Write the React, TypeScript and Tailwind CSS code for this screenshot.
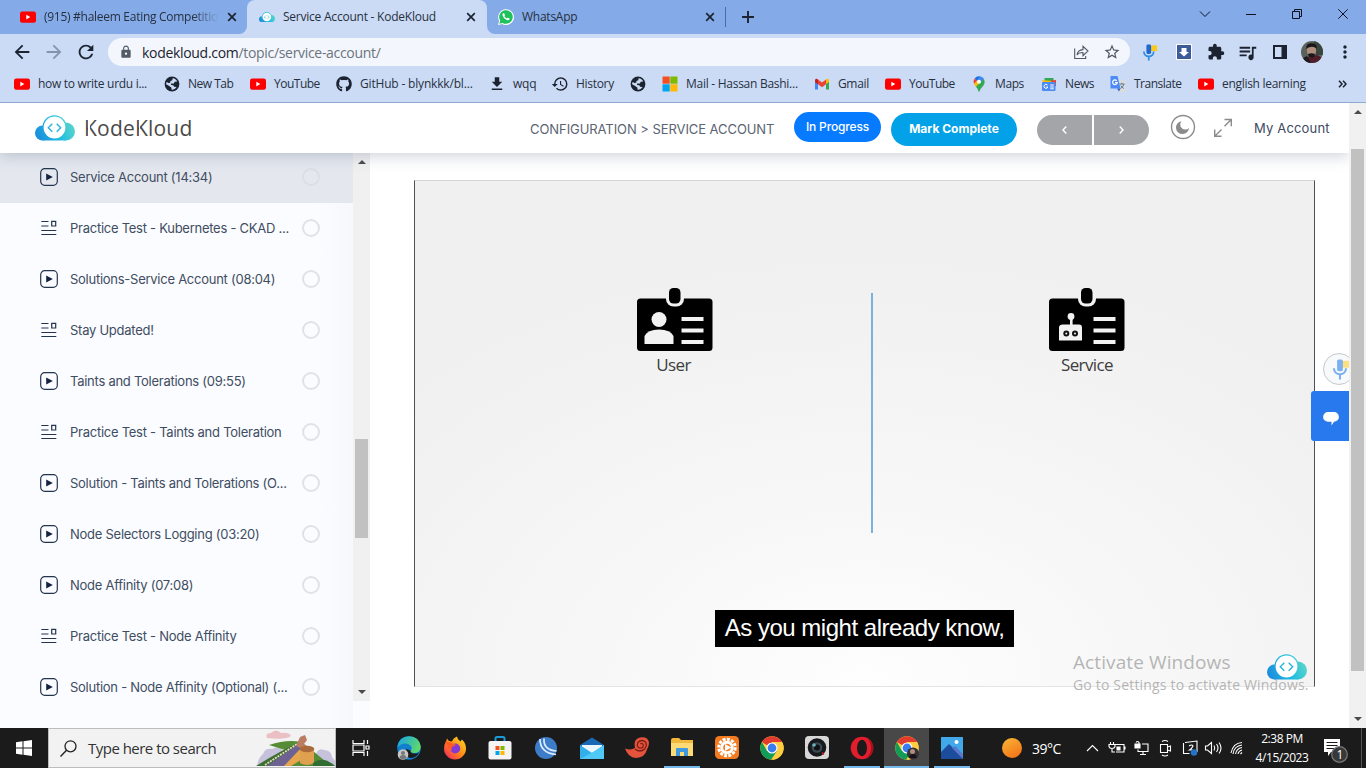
import React from "react";
import { FaGithub } from "react-icons/fa";
import { MdArrowBack, MdArrowForward, MdRefresh, MdLock, MdStarBorder, MdExtension, MdQueueMusic, MdHistory, MdMoreVert, MdDownload } from "react-icons/md";

function Cloud({ id, className }: { id: string; className: string }) {
  return (
    <svg viewBox="0 0 40 26" className={className}>
      <defs>
        <linearGradient id={id} gradientUnits="userSpaceOnUse" x1="0" y1="24" x2="38" y2="6">
          <stop offset="0" stopColor="#1b86dd" />
          <stop offset="0.55" stopColor="#20bde0" />
          <stop offset="1" stopColor="#5fd6c8" />
        </linearGradient>
      </defs>
      <g fill={`url(#${id})`}>
        <circle cx="7.500" cy="18" r="7.500" />
        <circle cx="31" cy="16.500" r="9" />
        <circle cx="19.500" cy="12.300" r="12" />
        <path d="M7.500 15h23.500v10.500H7.500z" />
      </g>
      <circle cx="19.500" cy="12.500" r="10.900" fill="#fff" />
      <path d="M17.300 8.700l-4 4 4 4M21.700 8.700l4 4-4 4" fill="none" stroke="#25b5dd" strokeWidth="1.400" />
    </svg>
  );
}

function YouTube() {
  return (
    <svg viewBox="0 0 16 16" className="size-4 shrink-0">
      <rect x="0" y="2.500" width="16" height="11.300" rx="2.200" fill="#f00" />
      <path d="M6.300 5.800v4.600l4-2.300z" fill="#fff" />
    </svg>
  );
}

function Globe() {
  return (
    <svg viewBox="0 0 16 16" className="size-4 shrink-0">
      <circle cx="8" cy="8" r="7.400" fill="#1c2330" />
      <path d="M8.600 2.200q3.300.2 4.700 3.300l-2.600.2-.8 1.700-2.700.1-.3 1.400 2.300.4 1 1.400 2.400.2q-1.800 3-4.800 3.100l-.5-2.500L4.800 9.700 2.100 8.200q.1-1.200.5-2.100l1.900 1 1.700-.3.3-1.700 1.800-.8z" fill="#cbdbf5" />
    </svg>
  );
}

function CloseX() {
  return (
    <svg viewBox="0 0 10 10" className="size-[10px] shrink-0">
      <path d="M1.200 1.200l7.600 7.600M8.800 1.200L1.200 8.800" stroke="#1c2433" strokeWidth="1.700" />
    </svg>
  );
}

function WhatsApp() {
  return (
    <svg viewBox="0 0 16 16" className="size-4 shrink-0">
      <path d="M0 16l1.100-4.100A7.900 7.900 0 1 1 4.100 15z" fill="#fff" />
      <path d="M1.300 14.700l.9-3.100A6.800 6.800 0 1 1 4.600 13.900z" fill="#1fc15d" />
      <path d="M5.300 4.200c-.9.500-1 1.600-.5 2.700.8 1.800 2.200 3.200 4 4.100 1.200.500 2.300.3 2.800-.7.200-.5 0-.8-.3-1l-1.200-.6c-.3-.1-.5 0-.7.200l-.5.600c-.9-.3-1.900-1.200-2.500-2.200l.5-.7c.1-.2.100-.4 0-.6l-.5-1.300c-.2-.5-.6-.6-1.100-.500z" fill="#fff" />
    </svg>
  );
}

function MicIcon({ className, soft }: { className: string; soft?: boolean }) {
  const blue = soft ? "#7db0ee" : "#1f67d2";
  return (
    <svg viewBox="0 0 16 18" className={className}>
      <rect x="8" y="1.500" width="7.500" height="6" fill={soft ? "#fbdf83" : "#fbc916"} />
      <rect x="4.200" y="0.500" width="5" height="10" rx="1.500" fill={blue} />
      <path d="M1.500 8a5.200 5.200 0 0 0 10.400 0M6.700 13v4.500" fill="none" stroke={soft ? "#7db0ee" : "#2b8ce6"} strokeWidth="1.800" />
    </svg>
  );
}

function Microsoft() {
  return (
    <svg viewBox="0 0 16 16" className="size-4 shrink-0">
      <path d="M.5.500h7.200v7.200H.5z" fill="#f25022" />
      <path d="M8.300.5h7.200v7.200H8.300z" fill="#7fba00" />
      <path d="M.5 8.300h7.200v7.200H.5z" fill="#00a4ef" />
      <path d="M8.300 8.300h7.200v7.200H8.300z" fill="#ffb900" />
    </svg>
  );
}

function Gmail() {
  return (
    <svg viewBox="0 0 16 16" className="size-4 shrink-0">
      <path d="M1 4.500v9h3V7z" fill="#4285f4" />
      <path d="M15 4.500v9h-3V7z" fill="#34a853" />
      <path d="M4 3.500L8 6.600l4-3.100v4.700L8 11.200 4 8.200z" fill="#ea4335" />
      <path d="M1 4.500c0-1.700 1.700-2.200 3-1v4.700L1 6z" fill="#c5221f" />
      <path d="M15 4.500c0-1.700-1.700-2.200-3-1v4.700L15 6z" fill="#fbbc04" />
    </svg>
  );
}

function Maps() {
  return (
    <svg viewBox="0 0 16 16" className="size-4 shrink-0">
      <path d="M8 .3A5.600 5.600 0 0 0 3.600 2.400L6.300 4.700 9.800.6Q9 .3 8 .3z" fill="#1a73e8" />
      <path d="M3.600 2.400A5.500 5.500 0 0 0 3 8l3.300-3.300z" fill="#ea4335" />
      <path d="M9.800.6L6 5l3.800 2.500 3-4.800A5.400 5.400 0 0 0 9.800.6z" fill="#4285f4" />
      <path d="M3 8c.6 1.100 1.300 1.900 1.900 2.700L9.800 7.400 6 4.900z" fill="#fbbc04" />
      <path d="M12.800 2.700L4.900 10.700C6.500 12.800 7 13.500 7.300 15c.3 1 1.100 1 1.400 0 .8-3.800 4.900-5 4.900-9.100q0-1.700-.8-3.200z" fill="#34a853" />
      <circle cx="8" cy="5.700" r="2" fill="#fff" />
    </svg>
  );
}

function News() {
  return (
    <svg viewBox="0 0 16 16" className="size-4 shrink-0">
      <path d="M3.500 2h9v8h-9z" fill="#34a853" />
      <path d="M1.500 4l9 1-1 5-8-1z" fill="#fbbc04" />
      <path d="M10 4.500l5-.5v6h-4z" fill="#ea4335" />
      <rect x="1" y="6" width="13.500" height="9" rx="1" fill="#4c8bf5" />
      <path d="M6.500 9a2 2 0 1 0 .4 2H5.200M12.800 9H9.200M12.800 11H9.200M12.800 12.800H9.200" stroke="#fff" strokeWidth="1" fill="none" />
    </svg>
  );
}

function Translate() {
  return (
    <svg viewBox="0 0 16 16" className="size-4 shrink-0">
      <path d="M6 4.500h9.500V16H9z" fill="#dcdcdc" />
      <path d="M9.500 8h5M12 6.800V8M14 8q-.7 3-3.500 4.500M10.800 9.500q1 2 3 3" stroke="#5e7d99" fill="none" />
      <path d="M.5 0h7l3 12.500H.5z" fill="#4c8bf5" />
      <path d="M7 12.500h3.500L9 15.500z" fill="#2f62c4" />
      <path d="M6.700 4.800a2.300 2.300 0 1 0 .5 1.800H5" stroke="#fff" strokeWidth="1.200" fill="none" />
    </svg>
  );
}

const ui = "font-['Open_Sans','Noto_Sans',sans-serif]";
const dark = "size-[18px] -mx-px shrink-0 text-[#1c2330]";

const bookmarks: { w: string; t?: string; track: string; icon: React.ReactNode }[] = [
  { w: "w-[150px]", t: "how to write urdu i...", track: "tracking-[-0.3px]", icon: <YouTube /> },
  { w: "w-[86px]", t: "New Tab", track: "tracking-[-0.5px]", icon: <Globe /> },
  { w: "w-[86px]", t: "YouTube", track: "tracking-[-0.5px]", icon: <YouTube /> },
  { w: "w-[153px]", t: "GitHub - blynkkk/bl...", track: "tracking-[-0.18px]", icon: <FaGithub className="size-4 shrink-0 text-[#1c2330]" /> },
  { w: "w-[63px]", t: "wqq", track: "tracking-[-0.2px]", icon: <MdDownload className={dark} /> },
  { w: "w-[78px]", t: "History", track: "tracking-[-0.3px]", icon: <MdHistory className={dark} /> },
  { w: "w-[32px]", track: "", icon: <Globe /> },
  { w: "w-[152px]", t: "Mail - Hassan Bashi...", track: "tracking-[-0.27px]", icon: <Microsoft /> },
  { w: "w-[71px]", t: "Gmail", track: "tracking-[-0.35px]", icon: <Gmail /> },
  { w: "w-[86px]", t: "YouTube", track: "tracking-[-0.5px]", icon: <YouTube /> },
  { w: "w-[70px]", t: "Maps", track: "tracking-[-0.4px]", icon: <Maps /> },
  { w: "w-[69px]", t: "News", track: "tracking-[-0.4px]", icon: <News /> },
  { w: "w-[88px]", t: "Translate", track: "tracking-[-0.5px]", icon: <Translate /> },
  { w: "w-[140px]", t: "english learning", track: "tracking-[-0.3px]", icon: <YouTube /> },
];

function Browser() {
  return (
    <header className={`${ui} flex h-[103px] shrink-0 flex-col border-b border-[#8fa9d2] bg-[#cbdbf5] text-[12px] text-[#27303f]`}>
      <div className="flex h-[34px] bg-[#cbdbf5]">
        <div className="flex w-[247px] items-center rounded-br-[8px] bg-[#84abe8] pr-[10px] pl-5">
          <YouTube />
          <span className="ml-2 w-[175px] overflow-hidden whitespace-nowrap tracking-[-0.28px] [mask-image:linear-gradient(90deg,#000_85%,transparent)]">(915) #haleem Eating Competitio</span>
          <span className="ml-2 flex"><CloseX /></span>
        </div>
        <div className="flex w-[240px] bg-[#84abe8]">
          <div className="flex w-[240px] items-center rounded-t-[8px] bg-[#cbdbf5] pl-3">
            <Cloud id="tabCloud" className="w-4 shrink-0" />
            <span className="ml-2 w-[183px] whitespace-nowrap tracking-[-0.23px]">Service Account - KodeKloud</span>
            <CloseX />
          </div>
        </div>
        <div className="flex flex-1 rounded-bl-[8px] bg-[#84abe8]">
          <div className="flex w-[239px] items-center pl-[11px]">
            <WhatsApp />
            <span className="ml-2 w-[183px] tracking-[-0.25px]">WhatsApp</span>
            <CloseX />
            <span className="ml-[10px] h-5 w-px bg-[#4a6ba3]" />
          </div>
          <div className="flex w-[44px] items-center justify-center">
            <svg viewBox="0 0 12 12" className="size-3"><path d="M6 0v12M0 6h12" stroke="#1c2433" strokeWidth="1.900" /></svg>
          </div>
          <div className="ml-auto flex h-[28px]">
            {["M0 2.500l5 5 5-5", "M0 5.500h10", "M.5 2.500h7v7h-7zM2.500 2.500v-2h7v7h-2", "M.3.300l9.400 9.400M9.700.3L.3 9.700"].map((d) => (
              <span key={d} className="flex w-[46px] items-center justify-center">
                <svg viewBox="0 0 10 10" className="size-[10px] overflow-visible"><path d={d} fill="none" stroke="#0c1220" /></svg>
              </span>
            ))}
          </div>
        </div>
      </div>
      <div className="flex h-[36px] items-center pt-0">
        <div className="flex w-[108px] items-center gap-[10px] pl-[11px] text-[22px] text-[#1c2330]">
          <MdArrowBack className="size-[22px]" />
          <MdArrowForward className="size-[22px] text-[#8492ac]" />
          <MdRefresh className="size-[22px]" />
        </div>
        <div className="flex h-7 w-[1022px] items-center rounded-full bg-[#f3f7fd] pl-[11px]">
          <MdLock className="size-[14px] text-[#545b66]" />
          <span className="ml-[9px] text-[14px] tracking-[-0.31px] text-[#6c737e]"><span className="text-[#1c2330]">kodekloud.com</span>/topic/service-account/</span>
          <svg viewBox="0 0 16 16" className="ml-auto size-4 text-[#515863]"><path d="M1.700 4.500v10h11v-2.500M4 11c.5-3.800 2.500-5.200 6-5.400V2.300l5 4.700-5 4.700V8.500c-3 0-4.700.500-6 2.500z" fill="none" stroke="currentColor" strokeWidth="1.100" /></svg>
          <MdStarBorder className="mr-[9px] ml-[14px] size-[18px] text-[#515863]" />
        </div>
        <div className="flex flex-1 items-center pl-[12px] text-[#1c2330]">
          <MicIcon className="h-[17px] w-4" />
          <svg viewBox="0 0 16 16" className="ml-[18px] size-4"><path d="M0 0h16v16H0z" fill="#fff" /><path d="M1 1h14v14H1z" fill="#3d5a99" /><path d="M5.500 4h5v4h2.500L8 12.500 3 8h2.500z" fill="#fff" /></svg>
          <MdExtension className="ml-[15px] size-[18px]" />
          <MdQueueMusic className="ml-[12px] size-[21px] scale-y-110" />
          <svg viewBox="0 0 14 14" className="ml-[15px] size-[14px]"><path d="M1 1h12v12H1z" fill="none" stroke="#1c2330" strokeWidth="2" /><path d="M8.500 0H14v14H8.500z" fill="#1c2330" /></svg>
          <Portrait className="ml-[14px] size-[22px]" />
          <MdMoreVert className="ml-[12px] size-[20px]" />
        </div>
      </div>
      <div className="flex h-[28px] items-center pl-[14px]">
        {bookmarks.map((b, i) => (
          <span key={i} className={`${b.w} flex shrink-0 items-center gap-2 whitespace-nowrap`}>
            {b.icon}
            {b.t && <span className={b.track}>{b.t}</span>}
          </span>
        ))}
        <svg viewBox="0 0 9 8" className="h-2 w-[9px]"><path d="M1 .8L4 4 1 7.200M5 .8L8 4 5 7.200" fill="none" stroke="#1c2330" strokeWidth="1.500" /></svg>
      </div>
    </header>
  );
}

function Portrait({ className }: { className: string }) {
  return (
    <svg viewBox="0 0 22 22" className={`${className} shrink-0 overflow-hidden rounded-full`}>
      <path d="M0 0h22v22H0z" fill="#59635b" />
      <path d="M13 0h9v14h-7z" fill="#39463e" />
      <path d="M2 22q1-6 8-7l6-1q5 1 6 8z" fill="#501e2b" />
      <path d="M0 22q0-5 6-7l4 7z" fill="#1d1a20" />
      <ellipse cx="10.500" cy="9.500" rx="4.600" ry="6" fill="#b08f7e" />
      <path d="M5.400 8Q4.500 2 10.500 2.200 16.500 2 15.700 8q-1-2-5-2.200-4 .2-5.300 2.200zM7 13q3.500-1.500 7 0-.5 3.800-3.500 3.600T7 13z" fill="#191719" />
    </svg>
  );
}

function Arrow({ up }: { up?: boolean }) {
  return (
    <svg viewBox="0 0 8 4" className="h-1 w-2"><path d={up ? "M0 4l4-4 4 4z" : "M0 0l4 4 4-4z"} fill="#4a4a4a" /></svg>
  );
}

const lessons: [string, boolean][] = [
  ["Service Account (14:34)", true],
  ["Practice Test - Kubernetes - CKAD ...", false],
  ["Solutions-Service Account (08:04)", true],
  ["Stay Updated!", false],
  ["Taints and Tolerations (09:55)", true],
  ["Practice Test - Taints and Toleration", false],
  ["Solution - Taints and Tolerations (O...", true],
  ["Node Selectors Logging (03:20)", true],
  ["Node Affinity (07:08)", true],
  ["Practice Test - Node Affinity", false],
  ["Solution - Node Affinity (Optional) (...", true],
];

/* Wordmark capital whose arms stand clear of its stem. */
function SplitK() {
  return <span className="relative after:absolute after:top-1 after:left-[4px] after:h-[22px] after:w-[1.5px] after:bg-white">K</span>;
}

function SiteHeader() {
  return (
    <div className="relative z-10 flex h-[50px] items-start bg-white text-[#4b5668] shadow-[0_3px_14px_rgba(80,95,125,0.28)]">
      <Cloud id="siteCloud" className="mt-3 ml-[35px] h-[26px] w-10 shrink-0" />
      <span className="mt-[10px] ml-[9px] w-[436px] font-['Open_Sans',sans-serif] text-[21px] leading-[30px] tracking-[0.2px] text-[#4a4a4a]"><SplitK />ode<SplitK />loud</span>
      <span className="mt-4 w-[274px] pl-[10px] text-[13px] leading-5 tracking-[-0.07px] whitespace-nowrap text-[#5a6472]">CONFIGURATION &gt; SERVICE ACCOUNT</span>
      <span className="mt-[9px] flex h-[30px] w-[87px] items-center justify-center rounded-full bg-[#077bff] text-[12px] font-medium tracking-[-0.15px] text-white">In Progress</span>
      <span className="mt-[10px] ml-[10px] flex h-[33px] w-[126px] items-center justify-center rounded-full bg-[#03a2e8] pb-px text-[12px] font-bold text-white">Mark Complete</span>
      <div className="mt-[12px] ml-5 flex gap-[2px]">
        <span className="flex h-[30px] w-[55px] items-center justify-center rounded-l-full bg-[#a3a5a9]"><svg viewBox="0 0 5 8" className="h-2 w-[5px]"><path d="M4.300.6L1 4l3.300 3.400" fill="none" stroke="#fff" strokeWidth="1.400" /></svg></span>
        <span className="flex h-[30px] w-[55px] items-center justify-center rounded-r-full bg-[#a3a5a9]"><svg viewBox="0 0 5 8" className="h-2 w-[5px]"><path d="M.7.600L4 4 .7 7.400" fill="none" stroke="#fff" strokeWidth="1.400" /></svg></span>
      </div>
      <svg viewBox="0 0 26 26" className="mt-[11px] ml-[21px] size-[26px]"><circle cx="13" cy="13" r="11.500" fill="none" stroke="#8b8b8b" strokeWidth="1.400" /><path d="M11.500 7.200a4.800 4.800 0 0 0 7.500 6.700A6.500 6.500 0 1 1 11.500 7.200z" fill="#8b8b8b" /></svg>
      <svg viewBox="0 0 20 20" className="mt-[15px] ml-[17px] size-5"><path d="M11.500 1.500h6.800v6.700M18 1.800l-6.500 6.500M1.700 11.500v6.800h6.800M2 18l6.500-6.500" fill="none" stroke="#8b8b8b" strokeWidth="1.400" /></svg>
      <span className="mt-[15px] ml-[21px] text-[13px] leading-5 tracking-[0.17px] whitespace-nowrap text-[#3d4a60]">My Account</span>
    </div>
  );
}

function Sidebar() {
  return (
    <aside className="flex h-[575px] w-[370px] shrink-0 bg-[#fafcff]">
      <div className="w-[353px] bg-[linear-gradient(90deg,transparent_90%,#f6f8fb)]">
        {lessons.map(([name, video], i) => (
          <div key={name} className={`flex items-center pl-[40px] ${i === 0 ? "h-[50px] bg-[#e4e8ee] pb-[2px]" : "h-[51px] pb-px"}`}>
            <svg viewBox="0 0 18 18" className="size-[18px] shrink-0">
              {video ? (
                <>
                  <rect x=".7" y=".7" width="16.600" height="16.600" rx="4" fill="none" stroke="#24344f" strokeWidth="1.200" />
                  <path d="M6.200 5.400v7.200L12.800 9z" fill="#14233f" />
                </>
              ) : (
                <path d="M1.300 2.500h7.200M1.300 7h7.200M1.300 11.500h15M1.300 15.500h15M11.700 2.400h4v4.600h-4z" fill="none" stroke="#24344f" strokeWidth="1.200" />
              )}
            </svg>
            <span className="mt-[2px] ml-3 w-[232px] text-[13px] tracking-[-0.26px] whitespace-nowrap text-[#3f4c61]">{name}</span>
            <span className={`size-[18px] rounded-full border-2 ${i === 0 ? "border-[#dcdfe2]" : "border-[#e1e2e4]"}`} />
          </div>
        ))}
      </div>
      <div className="flex h-[548px] w-[17px] flex-col items-center bg-[#f0f0f0]">
        <span className="mt-[7px] flex h-1"><Arrow up /></span>
        <span className="mt-[275px] h-[99px] w-[13px] bg-[#c1c1c1]" />
        <span className="mt-auto mb-[7px] flex h-1"><Arrow /></span>
      </div>
    </aside>
  );
}

function Badge({ robot }: { robot?: boolean }) {
  return (
    <svg viewBox="0 1 76 66" className="h-[66px] w-[76px]">
      <rect x="0" y="11.500" width="75.500" height="52.500" rx="3.500" fill="#000" />
      <rect x="29" y="2" width="18" height="17.500" rx="7.500" fill="#f2f2f2" />
      <rect x="32" y="1" width="11.500" height="15.500" rx="4.500" fill="#000" />
      {robot ? (
        <g fill="#f2f2f2">
          <circle cx="22" cy="29.500" r="3.400" />
          <path d="M21 31h2.600v7H21zM14 37.500h16q3 0 3 3V53.500H10V40.500q0-3 4-3z" />
          <circle cx="17.300" cy="46.500" r="3" fill="#111" />
          <circle cx="26" cy="46.500" r="3" fill="#111" />
          <circle cx="17.300" cy="46.500" r="1" />
          <circle cx="26" cy="46.500" r="1" />
        </g>
      ) : (
        <g fill="#f2f2f2">
          <circle cx="22" cy="32.500" r="7.500" />
          <path d="M7.500 57V49q3-6.500 14.500-6.500T36.500 49v8z" />
        </g>
      )}
      <path d="M44.500 32h22M44.500 43.500h22M44.500 55h22" stroke="#f2f2f2" strokeWidth="4" />
    </svg>
  );
}

function Video() {
  return (
    <section className="relative mt-[27px] ml-[44px] flex h-[507px] w-[901px] flex-col border-x border-t border-b border-x-[#4e5157] border-t-[#d5d5d5] border-b-[#e4e4e4] bg-[radial-gradient(ellipse_70%_85%_at_50%_100%,#fefefe,#f7f7f7_45%,#f0f0f0)]">
      <div className="flex pt-[107px] font-['Open_Sans',sans-serif] text-[17px] leading-6 text-[#3d3d3d]">
        <div className="ml-[222px] flex w-[76px] flex-col items-center">
          <Badge />
          <span className="-mt-px -ml-[3px] tracking-[-0.6px]">User</span>
        </div>
        <div className="mt-[5px] ml-[158px] h-[240px] w-[2px] bg-[#7eb0d8]" />
        <div className="ml-[176px] flex w-[76px] flex-col items-center">
          <Badge robot />
          <span className="-mt-px tracking-[-0.6px]">Service</span>
        </div>
      </div>
      <div className="mx-auto mt-auto mb-[39px] flex h-[37px] w-[299px] items-center justify-center bg-black pb-[2px] font-['Liberation_Sans',sans-serif] text-[24px] tracking-[-0.48px] whitespace-nowrap text-white">As you might already know,</div>
      <Cloud id="videoCloud" className="absolute top-[473px] left-[852px] h-[26px] w-10" />
    </section>
  );
}

function TaskIcon({ children, state = "", w = "w-[45px]" }: { children: React.ReactNode; state?: string; w?: string }) {
  return (
    <span className={`${w} flex h-10 shrink-0 items-center justify-center ${state}`}>
      <svg viewBox="0 0 24 24" className="size-6">{children}</svg>
    </span>
  );
}

function ChromeLogo() {
  return (
    <>
      <circle cx="12" cy="12" r="11.700" fill="#ffcd40" />
      <path d="M12 12L1.900 6.100A11.700 11.700 0 0 1 22.100 6.100H12z" fill="#e33b2e" />
      <path d="M1.900 6.100A11.700 11.700 0 0 0 11 23.700L17 15 7 15z" fill="#119d58" />
      <path d="M22.200 6.300H12l5 9-5 8.400A11.700 11.700 0 0 0 22.200 6.300z" fill="#ffcd40" />
      <circle cx="12" cy="12" r="5.500" fill="#fff" />
      <circle cx="12" cy="12" r="4.400" fill="#3a7df0" />
    </>
  );
}

function Taskbar() {
  const active = "border-b-2 border-[#76b9ed] pt-[2px]";
  const running = "w-9 ml-[5px] mr-1";
  return (
    <footer className={`${ui} flex h-10 shrink-0 bg-[#1b1b1b] text-white`}>
      <span className="flex w-12 items-center justify-center"><svg viewBox="0 0 16 16" className="size-4"><path d="M0 2.300l6.500-1v6.300H0zM7.500 1.200L16 0v7.600H7.500zM0 8.500h6.500v6.300l-6.500-1zM7.500 8.500H16V16l-8.500-1.200z" fill="#fff" /></svg></span>
      <div className="flex w-[288px] items-center border border-[#bcbcbc] bg-[#f2f2f2] pl-[11px] text-[#333]">
        <svg viewBox="0 0 17 17" className="size-[17px]"><circle cx="10.500" cy="6.300" r="5.500" fill="none" stroke="#222" strokeWidth="1.300" /><path d="M6.500 10.300L.5 16.400" stroke="#222" strokeWidth="1.400" /></svg>
        <span className="ml-[11px] text-[15px] tracking-[-0.52px] whitespace-nowrap">Type here to search</span>
        <svg viewBox="0 0 80 36" className="ml-auto h-9 w-[80px] shrink-0">
          <path d="M12 8q-2-5 4-5 5-5 10 0 8-1 10 3-5 4-24 2z" fill="#eac0c4" />
          <path d="M2 36q1-8 6-12 2-6 9-5 6-4 12 2l3 15z" fill="#c7c2dc" />
          <path d="M60 26q3-9 9-6 7 0 8 7l3 4v5H58z" fill="#c7c2dc" />
          <path d="M14 15q18-6 32-3l12 9 18 15H6l24-16z" fill="#568c35" />
          <path d="M1 36q24-15 40-22l5 5-14 17z" fill="#3d7030" />
          <path d="M26 36l17-17 3 1v10l-10 6z" fill="#e7a54e" />
          <path d="M12 36l30-21 4 3-17 18z" fill="#6d6292" />
          <path d="M10 35l32-21" stroke="#e9d9c4" strokeWidth="1.800" strokeDasharray="2 1" />
          <path d="M41 16l4-9 5-2 2 5-3 4 6 4-3 3z" fill="#ba7c62" />
          <path d="M45 20h14v13q-7 4-14 0z" fill="#dfa050" />
          <ellipse cx="52" cy="19" rx="7.300" ry="3.300" fill="#a96a3c" />
          <path d="M58 33q10-8 22 3H58z" fill="#2f6d32" />
        </svg>
      </div>
      <TaskIcon w="w-[50px]"><path d="M4 4v3.500h11V4M4 20v-3.500h11V20M4 9h11v6H4zM18.500 4v4M18.500 15v5M17 10h3v3h-3z" fill="none" stroke="#fff" strokeWidth="1.200" /></TaskIcon>
      <TaskIcon w="w-[46px]">
        <defs><linearGradient id="edge" x1="0" y1=".3" x2="1" y2=".7"><stop offset="0" stopColor="#1ba7e0" /><stop offset="1" stopColor="#64dc62" /></linearGradient></defs>
        <circle cx="12" cy="12" r="11.800" fill="#127fce" />
        <path d="M.3 11Q2 .2 12 .2q10.500.3 11.800 10.500Q23 17 17 17q-4-.3-3.500-2.500 2.500-2 0-5Q8 5 .3 11z" fill="url(#edge)" />
        <path d="M13.500 14.500q-.5 2.500 3.500 3 4 .5 5.500-1.500-3.500 6.500-10 6-5.500-4-3-9z" fill="#1b1b1b" />
        <circle cx="6" cy="18.500" r="5.300" fill="#c6c6c6" /><circle cx="6" cy="17" r="2" fill="#777" /><path d="M2.500 22q0-3 3.500-3t3.500 3q-3.500 2.500-7 0z" fill="#777" />
      </TaskIcon>
      <TaskIcon w="w-[45px]">
        <defs><linearGradient id="fox" x1="1" y1="0" x2="0" y2="1"><stop offset="0" stopColor="#ffe226" /><stop offset=".5" stopColor="#ff8a16" /><stop offset="1" stopColor="#f5156c" /></linearGradient></defs>
        <path d="M3 5.500l1-3 2 2.500q2 0 3 .5Q10 2 14 .5q0 2.500 3.500 5L19 3.500q4 4 4 9a11 11 0 0 1-22 0q0-4 2-7z" fill="url(#fox)" /><circle cx="12.200" cy="12.500" r="5" fill="#8139d8" /><path d="M2 6q5-1 8 2l3 .5q-1 2-3.500 2-2 1.500 0 4-5-1-5-5z" fill="#ff5a24" />
      </TaskIcon>
      <TaskIcon w="w-[46px]"><path d="M7.500 6V2.500q0-1.500 1.500-1.500h6q1.500 0 1.500 1.500V6" fill="none" stroke="#1b9bd8" strokeWidth="2" /><rect x=".5" y="5" width="23" height="18.500" rx="2" fill="#f4f4f4" /><path d="M7.500 10h4v4h-4z" fill="#f25022" /><path d="M12.500 10h4v4h-4z" fill="#7fba00" /><path d="M7.500 15h4v4h-4z" fill="#00a4ef" /><path d="M12.500 15h4v4h-4z" fill="#ffb900" /></TaskIcon>
      <TaskIcon w="w-[46px]"><circle cx="12" cy="12" r="11" fill="#3d7cc9" /><path d="M6 3q0 14 16 15.500M10 2.500Q9 14 22.500 15" fill="none" stroke="#dcecff" strokeWidth="1.700" /></TaskIcon>
      <TaskIcon><path d="M0 9l12-7.500L24 9v14H0z" fill="#1a68b4" /><path d="M2 9h20v9H2z" fill="#eaf5fd" /><path d="M0 9l12 8 12-8v14H0z" fill="#32aee8" /><path d="M0 23l14-7.500L24 9v14z" fill="#4fc8f5" /></TaskIcon>
      <TaskIcon><path d="M0 12.500q6 2 10-.5Q8 3 15 1.500q8-1 9 5 0 4-2 7-2 8-11 8.500-8-.500-11-9.500z" fill="#e5533d" /><path d="M10 13q5 4 9.500 0Q23 9 20 5.500 16 3 13 6.500q-2 4 1.500 5.500 4 .5 3.800-3-.8-2.500-3-1" fill="none" stroke="#7a1f18" strokeWidth="1.300" /></TaskIcon>
      <TaskIcon w="" state={`${active} ${running}`}><path d="M1 4q0-2 2-2h6l2 2h12v16H1z" fill="#f1b83c" /><path d="M1 7h22v13H1z" fill="#ffdb75" /><path d="M6 20v-7q0-1 1-1h10q1 0 1 1v7h-4v-4h-4v4z" fill="#3f9adf" /></TaskIcon>
      <TaskIcon><rect width="24" height="23" rx="4.500" fill="#f47b20" /><circle cx="12" cy="11.500" r="8.300" fill="none" stroke="#fff" strokeWidth="3" strokeDasharray="3 1.300" /><circle cx="12" cy="11.500" r="5.300" fill="none" stroke="#fff" strokeWidth="3" /><path d="M10 8l6.500 3.500L10 15z" fill="#fff" /></TaskIcon>
      <TaskIcon><ChromeLogo /></TaskIcon>
      <TaskIcon><rect width="24" height="23" rx="4" fill="#d8d8d8" /><circle cx="12" cy="11.500" r="9.300" fill="#17191c" /><circle cx="12" cy="11.500" r="5.300" fill="#394a55" /><circle cx="12" cy="11.500" r="3" fill="#111" /><circle cx="9" cy="9" r="1.800" fill="#6cb4bd" /><path d="M17 16.500l2 2" stroke="#c22" strokeWidth="1.500" /></TaskIcon>
      <TaskIcon w="" state={`${active} ${running}`}><ellipse cx="12" cy="12" rx="11.300" ry="11.300" fill="#e21e2d" /><path d="M17 2q6 3 6.300 10T16 22.500q5-4 5-10.500T17 2z" fill="#a60f1e" /><ellipse cx="12" cy="12" rx="5" ry="8.300" fill="#1b1b1b" /></TaskIcon>
      <TaskIcon state={`${active} bg-[#484848]`}><ChromeLogo /><circle cx="18" cy="17.500" r="6" fill="#343034" /><circle cx="17.500" cy="15.500" r="2.500" fill="#b08e80" /><path d="M14 22q1-4 4-4t4 4z" fill="#161418" /></TaskIcon>
      <TaskIcon w="" state={`${active} ${running}`}><path d="M1 1h22v22H1z" fill="#41a8ea" /><path d="M1 16l8-8 14 14v1H1z" fill="#1c4c9c" /><path d="M12 12l3-2 8 8v5z" fill="#5878cc" /><circle cx="16.500" cy="6" r="2" fill="#fff" /></TaskIcon>
      <div className="ml-auto flex w-[364px] items-center">
        <span className="size-5 rounded-full bg-[linear-gradient(150deg,#f8b637,#f36d14)]" />
        <span className="ml-[10px] w-[54px] text-[14px] tracking-[-0.5px]">39°C</span>
        <svg viewBox="0 0 160 20" className="h-5 w-[160px] shrink-0" fill="none" stroke="#fff" strokeWidth="1.100">
          <path d="M1 13l5.500-5.500L12 13" />
          <path d="M28.500 6.500h9.500v7.500h-8M39 8.500v3M24.500 4v2.500M27.500 4v2.500M23 6.500h6v2q-.5 2-3 2t-3-2zM26 10.500v3.500h3" />
          <path d="M31 9h3v3h-3z" fill="#fff" />
          <path d="M56 6h6v7.500h-10v-2M57 13.500v3M54 16.500h6M50 4.500q1.500-2 3 0V6" />
          <path d="M49 6h5v4h-5z" fill="#fff" />
          <path d="M74.500 6.500h7v8h-7zM81.500 9l3-1v5l-3-1M76 3.500q3-2 6 0M76 17q3 2 6 0" />
          <path d="M99 4.500l12-1.500v11M97.500 5v10.500h6M103 8q3-2 4 0-1 2.500-3.500 4h3" />
          <circle cx="108" cy="14.500" r="3.300" fill="#2473c5" stroke="none" />
          <path d="M119.500 8v4h2l4 3.500v-11l-4 3.500zM128 7.500q1.500 2.500 0 5M130.500 6q3 4 0 8M133 4.500q4 5.500 0 11" />
          <path d="M147 16q1-8 9-9M149.500 16q1-5.500 6.500-6.500M152 16q.5-3 4-4M154.500 16l1.500-1.500M145 15Q147 5 156 4.500" />
        </svg>
        <div className="w-[72px] pb-[1px] text-center text-[12px] leading-[19px] tracking-[-0.45px] whitespace-nowrap">2:38 PM<br />4/15/2023</div>
        <svg viewBox="0 0 28 28" className="mt-[5px] ml-[3px] size-7"><path d="M3 2h16v13H10l-3 4v-4H3z" fill="#fff" /><path d="M5.500 5.500h11M5.500 8.500h11M5.500 11.500h8" stroke="#1b1b1b" /><circle cx="18.500" cy="17.500" r="7.800" fill="#383838" stroke="#777" strokeWidth="1.300" /><text x="15.500" y="21.800" fontSize="12" fill="#fff" fontFamily="Open Sans">1</text></svg>
        <span className="mr-[4px] ml-auto h-10 w-px bg-[#555]" />
      </div>
    </footer>
  );
}

export default function App() {
  return (
    <div className="relative flex h-[768px] w-[1366px] flex-col overflow-hidden bg-white font-['Inter',sans-serif]">
      <Browser />
      <main className="flex h-[625px] shrink-0">
        <div className="w-[1349px] overflow-hidden">
          <SiteHeader />
          <div className="flex">
            <Sidebar />
            <Video />
          </div>
        </div>
        <div className="flex w-[17px] flex-col items-center bg-[#f1f1f1]">
          <span className="mt-[7px] flex h-1"><Arrow up /></span>
          <span className="mt-[35px] h-[522px] w-[13px] bg-[#c1c1c1]" />
          <span className="mt-auto mb-[7px] flex h-1"><Arrow /></span>
        </div>
      </main>
      <Taskbar />
      <div className="absolute top-[353px] left-[1323px] z-20 h-8 w-[26px] overflow-hidden">
        <div className="flex size-8 items-center justify-center rounded-full border border-[#c5c8ce] bg-[#f8f9fb]"><MicIcon soft className="ml-1 h-[21px] w-[19px]" /></div>
      </div>
      <div className="absolute top-[391px] left-[1311px] z-20 flex h-[50px] w-[38px] items-center justify-center rounded-l-[3px] bg-[#2979ee]">
        <svg viewBox="0 0 16 14" className="mt-[5px] ml-[2px] h-[14px] w-4"><path d="M5 0h6a4.800 4.800 0 0 1 0 9.800L8.500 13.500V9.800H5A4.900 4.900 0 0 1 5 0z" fill="#fff" /></svg>
      </div>
      <div className="pointer-events-none absolute top-[650px] left-[1073px] z-30 font-['Open_Sans',sans-serif] whitespace-nowrap text-[#a8a8a8]/85">
        <div className="text-[19px] leading-6 tracking-[0.1px]">Activate Windows</div>
        <div className="text-[14px] leading-[22px] tracking-[0.18px]">Go to Settings to activate Windows.</div>
      </div>
    </div>
  );
}
